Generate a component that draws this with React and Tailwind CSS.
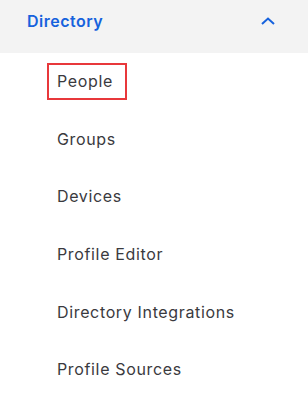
import React from "react";

const ITEMS = [
  "People",
  "Groups",
  "Devices",
  "Profile Editor",
  "Directory Integrations",
  "Profile Sources",
];

export default function App() {
  return (
    <div className="w-[308px] h-[398px] bg-white font-['Inter','Liberation_Sans',sans-serif] overflow-hidden">
      <div className="h-[53px] bg-[#f3f3f3] flex items-center justify-between pb-[11px] pl-[27px] pr-[33px]">
        <span className="text-[16px] font-semibold text-[#1662dd] tracking-[0.5px]">Directory</span>
        <svg width="14" height="8" viewBox="0 0 14 8" fill="none" className="text-[#1662dd]">
          <path d="M1 7L7 1.5L13 7" stroke="currentColor" strokeWidth="2" />
        </svg>
      </div>
      <ul className="flex flex-col">
        {ITEMS.map((label, i) => (
          <li key={label} className="h-[57.6px] flex items-center pl-[47px]">
            <span
              className={`border-2 pl-[8px] pr-[12px] py-[6px] text-[16px] leading-[21px] tracking-[0.65px] text-[#3a3a3e] ${
                i === 0 ? "border-[#e8383b]" : "border-transparent"
              }`}
            >
              {label}
            </span>
          </li>
        ))}
      </ul>
    </div>
  );
}
